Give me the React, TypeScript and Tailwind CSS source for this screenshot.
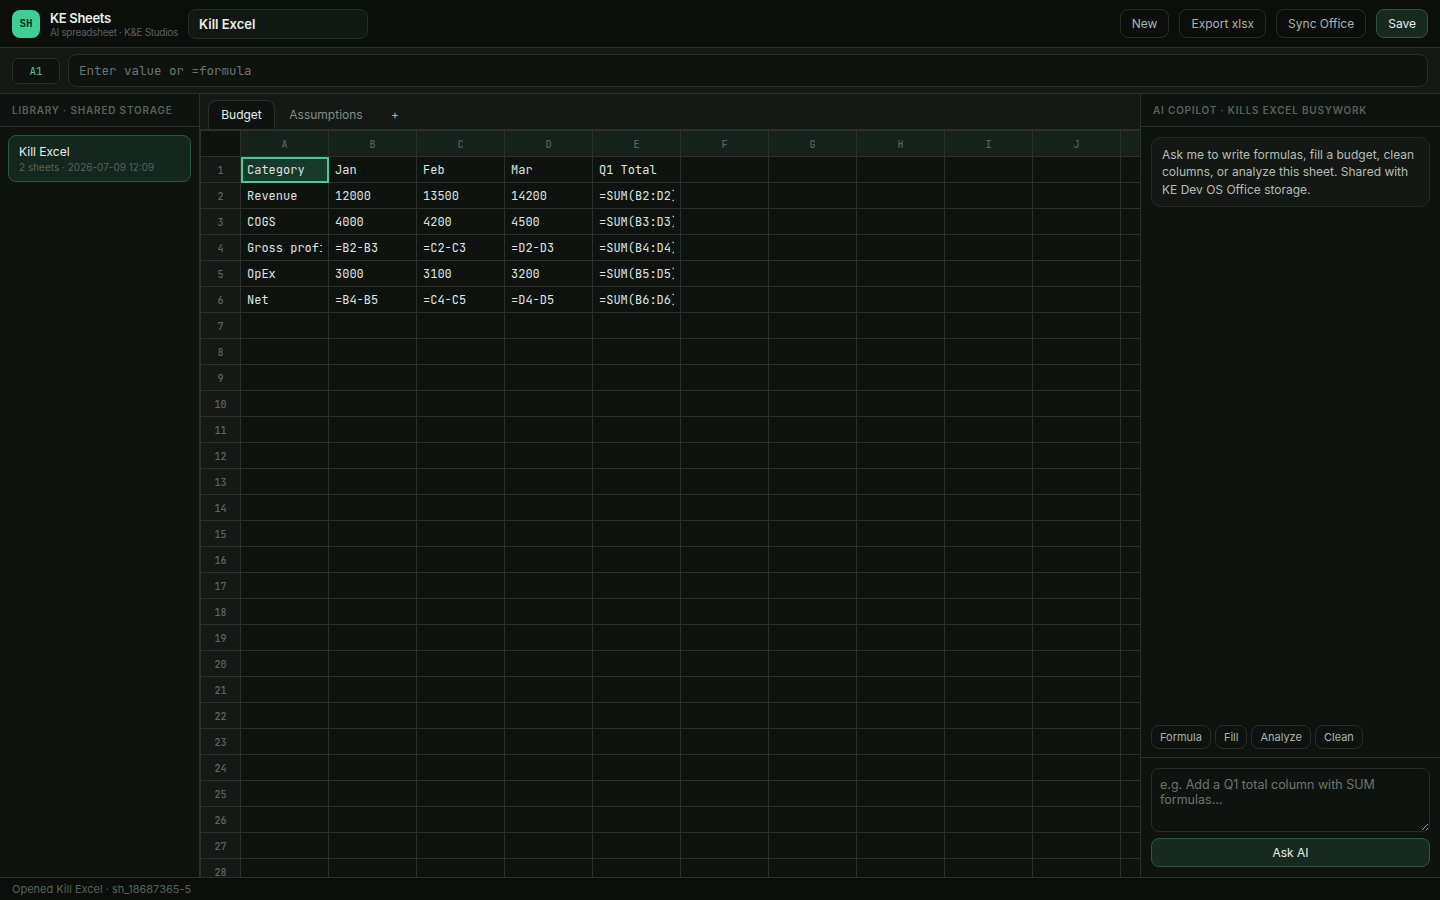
const COLS = ['A', 'B', 'C', 'D', 'E', 'F', 'G', 'H', 'I', 'J'];

const DATA = [
  ['Category', 'Jan', 'Feb', 'Mar', 'Q1 Total'],
  ['Revenue', '12000', '13500', '14200', '=SUM(B2:D2)'],
  ['COGS', '4000', '4200', '4500', '=SUM(B3:D3)'],
  ['Gross profit', '=B2-B3', '=C2-C3', '=D2-D3', '=SUM(B4:D4)'],
  ['OpEx', '3000', '3100', '3200', '=SUM(B5:D5)'],
  ['Net', '=B4-B5', '=C4-C5', '=D4-D5', '=SUM(B6:D6)'],
];

const Header = () => (
  <header className="flex h-12 shrink-0 items-center gap-2.5 border-b border-[#2a302b] bg-[#0b0e0b] px-3">
    <div className="flex size-7 items-center justify-center rounded-lg bg-[#3ecf96] font-['JetBrains_Mono','DejaVu_Sans_Mono',monospace] text-[11px] font-semibold text-[#0b2419]">
      SH
    </div>
    <div className="w-32 whitespace-nowrap">
      <div className="text-[13px] leading-[16px] font-semibold tracking-[-0.33px] text-[#e8ede9]">KE Sheets</div>
      <div className="text-[10px] leading-[12px] tracking-[-0.33px] text-[#56635b]">
        AI spreadsheet · K&amp;E Studios
      </div>
    </div>
    <input
      defaultValue="Kill Excel"
      className="h-[30px] w-[180px] rounded-lg border border-[#26302a] bg-[#111713] px-2.5 text-[13px] font-semibold text-[#e8ede9] outline-none"
    />
    <div className="ml-auto flex gap-2.5">
      {['New', 'Export xlsx', 'Sync Office'].map((label) => (
        <button key={label} className="h-[29px] rounded-lg border border-[#26302a] px-[11px] text-[12px] text-[#a9b5ad]">
          {label}
        </button>
      ))}
      <button className="h-[29px] rounded-lg border border-[#2c5843] bg-[#172a20] px-[11px] text-[12px] text-[#e8ede9]">
        Save
      </button>
    </div>
  </header>
);

const FormulaBar = () => (
  <div className="flex h-[46px] shrink-0 items-center gap-2 border-b border-[#2a302b] bg-[#141915] px-3">
    <div className="flex h-[26px] w-12 items-center justify-center rounded-md border border-[#26302a] bg-[#0e130f] pt-px font-['JetBrains_Mono','DejaVu_Sans_Mono',monospace] text-[11px] text-[#3ecf96]">
      A1
    </div>
    <input
      placeholder="Enter value or =formula"
      className="h-[33px] min-w-0 flex-1 rounded-lg border border-[#26302a] bg-[#0e130f] px-2.5 font-['JetBrains_Mono','DejaVu_Sans_Mono',monospace] text-[12.5px] outline-none placeholder:text-[#6c756f]"
    />
  </div>
);

const Library = () => (
  <aside className="flex w-[200px] shrink-0 flex-col border-r border-[#2a302b] bg-[#0e130f]">
    <div className="h-[33px] border-b border-[#2a302b] px-3 text-[10px] leading-[33px] font-semibold tracking-[0.8px] whitespace-nowrap text-[#56635b]">
      LIBRARY · SHARED STORAGE
    </div>
    <div className="p-2">
      <div className="h-[47px] rounded-lg border border-[#2c5843] bg-[#14271e] px-2.5 pt-2">
        <div className="text-[12px] leading-[16px] text-[#e8ede9]">Kill Excel</div>
        <div className="text-[10px] leading-[15px] text-[#56635b]">2 sheets · 2026-07-09 12:09</div>
      </div>
    </div>
  </aside>
);

const Sheet = () => (
  <main className="flex min-w-0 flex-1 flex-col overflow-hidden bg-[#0e130f]">
    <div className="flex h-9 shrink-0 items-end gap-1 border-b border-[#2a302b] bg-[#141915] px-2 text-[12px]">
      <div className="flex h-[29px] w-[67px] items-center justify-center rounded-t-lg border border-b-0 border-[#26302a] bg-[#0e130f] text-[#e8ede9]">
        Budget
      </div>
      <div className="flex h-[29px] w-[94px] items-center justify-center text-[#7f8d84]">Assumptions</div>
      <div className="flex h-[29px] w-[36px] items-center justify-center pt-px text-[12px] text-[#a9b5ad]">+</div>
    </div>
    <div className="min-h-0 flex-1 overflow-hidden">
      <table className="w-[1009px] table-fixed border-collapse font-['JetBrains_Mono','DejaVu_Sans_Mono',monospace]">
        <thead>
          <tr className="h-[26px]">
            <th className="w-10 border border-[#2a302b] bg-[#0e130f]" />
            {COLS.map((c) => (
              <th
                key={c}
                className="w-[88px] border border-[#2a302b] bg-[#14221b] p-0 pt-0.5 text-[10px] font-medium text-[#56635b]"
              >
                {c}
              </th>
            ))}
            <th className="w-[88px] border border-[#2a302b] bg-[#14221b]" />
          </tr>
        </thead>
        <tbody>
          {Array.from({ length: 28 }, (_, r) => (
            <tr key={r} className="h-[26px]">
              <th className="border border-[#2a302b] bg-[#141915] p-0 text-[10px] font-medium text-[#5b685f]">
                <div className="h-[25px] leading-[27px]">{r + 1}</div>
              </th>
              {COLS.map((c, i) => (
                <td key={c} className="border border-[#2a302b] p-0">
                  <div
                    className={
                      r === 0 && i === 0
                        ? 'relative -mr-px -mb-px h-[26px] bg-[#17382b] px-1.5 text-[12px] text-[#dfe5e0] outline-2 -outline-offset-2 outline-[#3ecf96]'
                        : 'h-[25px] px-1.5 text-[12px] text-[#dfe5e0]'
                    }
                  >
                    <div className="overflow-hidden leading-[27px] whitespace-nowrap">{DATA[r]?.[i] ?? ''}</div>
                  </div>
                </td>
              ))}
              <td className="border border-[#2a302b]" />
            </tr>
          ))}
        </tbody>
      </table>
    </div>
  </main>
);

const Copilot = () => (
  <aside className="flex w-[300px] shrink-0 flex-col border-l border-[#2a302b] bg-[#0e130f]">
    <div className="h-[33px] shrink-0 border-b border-[#2a302b] px-3 text-[10px] leading-[33px] font-semibold tracking-[0.8px] whitespace-nowrap text-[#56635b]">
      AI COPILOT · KILLS EXCEL BUSYWORK
    </div>
    <div className="flex-1 p-2.5">
      <div className="rounded-[10px] border border-[#232b26] bg-[#131814] px-2.5 py-2 text-[12px] leading-[17.4px] text-[#b4beb7]">
        Ask me to write formulas, fill a budget, clean columns, or analyze this sheet. Shared with KE Dev OS Office
        storage.
      </div>
    </div>
    <div className="flex gap-1 px-2.5 pb-2">
      {['Formula', 'Fill', 'Analyze', 'Clean'].map((label) => (
        <button key={label} className="h-6 rounded-lg border border-[#26302a] px-2 text-[11px] text-[#a9b5ad]">
          {label}
        </button>
      ))}
    </div>
    <div className="flex h-[120px] shrink-0 flex-col gap-1.5 border-t border-[#2a302b] p-2.5">
      <textarea
        placeholder="e.g. Add a Q1 total column with SUM formulas…"
        className="h-16 shrink-0 resize-y rounded-lg border border-[#26302a] bg-[#0e130f] p-2 text-[12.5px] leading-[15px] outline-none placeholder:text-[#6c756f]"
      />
      <button className="h-[29px] shrink-0 rounded-lg border border-[#2c5843] bg-[#172a20] text-[12px] text-[#e8ede9]">
        Ask AI
      </button>
    </div>
  </aside>
);

const App = () => {
  return (
    <div className="flex h-screen flex-col overflow-hidden bg-[#0b0e0b] font-['Inter',sans-serif] text-[#e8ede9]">
      <Header />
      <FormulaBar />
      <div className="flex min-h-0 flex-1">
        <Library />
        <Sheet />
        <Copilot />
      </div>
      <footer className="h-[23px] shrink-0 border-t border-[#2a302b] bg-[#0b0e0b] px-3 text-[11px] leading-[22px] text-[#56635b]">
        Opened Kill Excel · sh_18687365-5
      </footer>
    </div>
  );
};

export default App;
